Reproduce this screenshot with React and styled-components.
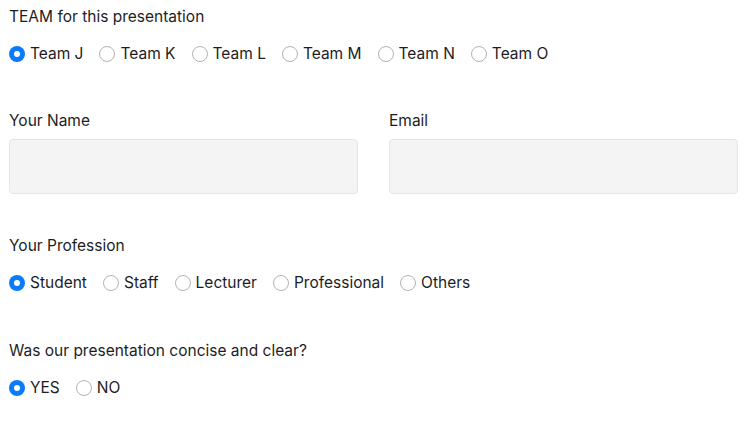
import React from 'react';
import styled, { createGlobalStyle } from 'styled-components';

const GlobalStyle = createGlobalStyle`
  body {
    margin: 0;
    background: #fff;
    font-family: Inter, "Open Sans", Arial, sans-serif;
    color: #1d1d1f;
  }
`;

const Form = styled.form`
  padding: 5px 10px 0 9px;
`;

const Section = styled.div`
  margin-bottom: ${(p) => p.gap || 0}px;
`;

const Label = styled.div`
  font-size: 15.5px;
  line-height: 24px;
  margin-bottom: ${(p) => (p.tight ? 6 : 13)}px;
`;

const RadioRow = styled.div`
  display: flex;
  align-items: center;
  flex-wrap: wrap;
`;

const RadioItem = styled.label`
  display: flex;
  align-items: center;
  font-size: 15.5px;
  line-height: 24px;
  margin-right: 16px;
`;

const Circle = styled.span`
  box-sizing: border-box;
  width: 16px;
  height: 16px;
  border-radius: 50%;
  margin-right: 5px;
  flex-shrink: 0;
  display: flex;
  align-items: center;
  justify-content: center;
  background: ${(p) => (p.checked ? '#0a7cfb' : '#fff')};
  border: ${(p) => (p.checked ? 'none' : '1px solid #b3b3b3')};

  &::after {
    content: '';
    display: ${(p) => (p.checked ? 'block' : 'none')};
    width: 6px;
    height: 6px;
    border-radius: 50%;
    background: #fff;
  }
`;

const Columns = styled.div`
  display: grid;
  grid-template-columns: 1fr 1fr;
  column-gap: 31px;
`;

const Input = styled.div`
  box-sizing: border-box;
  height: 55px;
  background: #f4f4f4;
  border: 1px solid #e5e5e5;
  border-radius: 4px;
`;

const Radios = ({ options, checked }) => (
  <RadioRow>
    {options.map((o) => (
      <RadioItem key={o}>
        <Circle checked={o === checked} />
        {o}
      </RadioItem>
    ))}
  </RadioRow>
);

export default function App() {
  return (
    <>
      <GlobalStyle />
      <Form>
        <Section gap={43}>
          <Label>TEAM for this presentation</Label>
          <Radios
            options={['Team J', 'Team K', 'Team L', 'Team M', 'Team N', 'Team O']}
            checked="Team J"
          />
        </Section>
        <Section gap={40}>
          <Columns>
            <div>
              <Label tight>Your Name</Label>
              <Input />
            </div>
            <div>
              <Label tight>Email</Label>
              <Input />
            </div>
          </Columns>
        </Section>
        <Section gap={44}>
          <Label>Your Profession</Label>
          <Radios
            options={['Student', 'Staff', 'Lecturer', 'Professional', 'Others']}
            checked="Student"
          />
        </Section>
        <Section>
          <Label>Was our presentation concise and clear?</Label>
          <Radios options={['YES', 'NO']} checked="YES" />
        </Section>
      </Form>
    </>
  );
}
